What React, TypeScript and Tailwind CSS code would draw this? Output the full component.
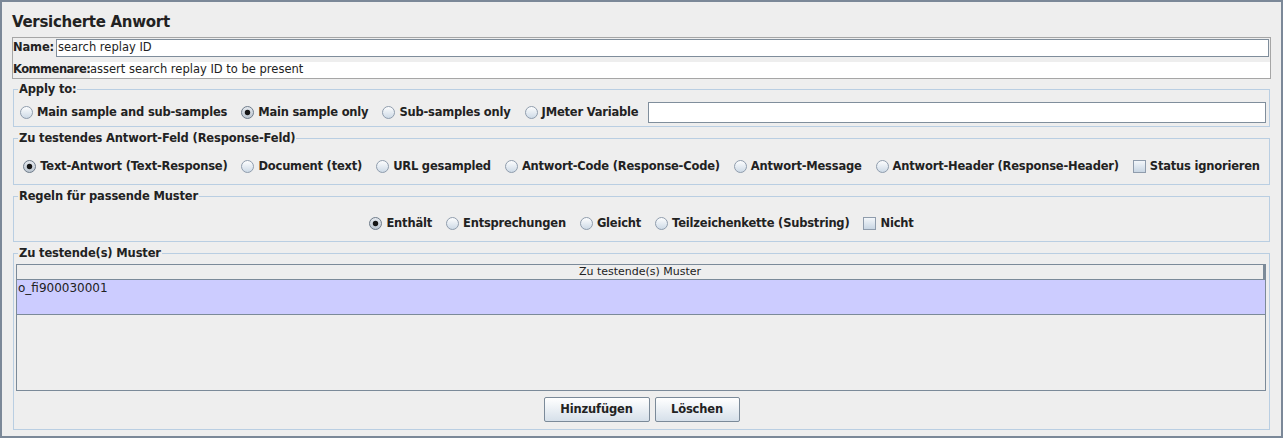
import React from "react";

function Radio({ checked }: { checked?: boolean }) {
  const id = checked ? "radOn" : "radOff";
  return (
    <svg width="13" height="13" viewBox="0 0 13 13" className="shrink-0 block">
      <defs>
        <linearGradient id={id} x1="0" y1="0" x2="0" y2="1">
          <stop offset="0" stopColor={checked ? "#e6eaef" : "#ffffff"} />
          <stop offset="1" stopColor={checked ? "#b9c4cf" : "#cbd8e5"} />
        </linearGradient>
      </defs>
      <circle cx="6.5" cy="6.5" r="6" fill={`url(#${id})`} stroke={checked ? "#6f7c8a" : "#8f9cac"} strokeWidth="1" />
      {checked && <circle cx="6.5" cy="6.5" r="2.7" fill="#161616" />}
    </svg>
  );
}

function Check() {
  return (
    <svg width="13" height="13" viewBox="0 0 13 13" className="shrink-0 block">
      <defs>
        <linearGradient id="chk" x1="0" y1="0" x2="0" y2="1">
          <stop offset="0" stopColor="#f5f8fb" />
          <stop offset="1" stopColor="#c6d4e2" />
        </linearGradient>
      </defs>
      <rect x="0.5" y="0.5" width="12" height="12" fill="url(#chk)" stroke="#8f9cac" strokeWidth="1" />
    </svg>
  );
}

function Opt({ label, checked, box }: { label: string; checked?: boolean; box?: boolean }) {
  return (
    <div className="flex items-center gap-[4px] whitespace-nowrap">
      {box ? <Check /> : <Radio checked={checked} />}
      <span className="font-bold tracking-[-0.2px]">{label}</span>
    </div>
  );
}

function Legend({ children }: { children: React.ReactNode }) {
  return (
    <legend className="ml-[4px] px-[1px] font-bold leading-[14px] tracking-[-0.15px] text-[#222]">{children}</legend>
  );
}

export default function App() {
  return (
    <div className="w-[1283px] h-[438px] overflow-hidden border-2 border-[#7b8898] bg-[#eeeeee] px-[10px] font-['DejaVu_Sans',sans-serif] text-[11.5px] text-[#222]">
      <div className="mt-[10px] h-[20px] text-[15px] leading-[20px] font-bold tracking-[-0.3px] text-[#222]">
        Versicherte Anwort
      </div>

      <div className="mt-[5px] border border-[#a6a6a6] pt-[1px]">
        <div className="flex h-[18px] items-center">
          <span className="w-[43px] shrink-0 font-bold tracking-[-0.15px]">Name:</span>
          <div className="mr-[1px] flex h-[18px] flex-1 items-center border border-[#7f8d9b] bg-white pl-[1px] text-[11.5px]">
            search replay ID
          </div>
        </div>
        <div className="mt-[5px] flex h-[16px] items-center">
          <span className="w-[77px] shrink-0 whitespace-nowrap font-bold tracking-[-0.5px]">Kommenare:</span>
          <div className="flex h-[16px] flex-1 items-center bg-white">assert search replay ID to be present</div>
        </div>
      </div>

      <fieldset className="mx-[1px] mt-[3px] min-w-0 border border-[#b9cee2] p-0">
        <Legend>Apply to:</Legend>
        <div className="flex h-[21px] items-center gap-[14px] pl-[6px] pr-[3px] mt-[6px] mb-[3px]">
          <Opt label="Main sample and sub-samples" />
          <Opt label="Main sample only" checked />
          <Opt label="Sub-samples only" />
          <Opt label="JMeter Variable" />
          <div className="-ml-[4px] h-[21px] flex-1 border border-[#808e9c] bg-white" />
        </div>
      </fieldset>

      <fieldset className="mx-[1px] mt-[4px] min-w-0 border border-[#b9cee2] p-0">
        <Legend>Zu testendes Antwort-Feld (Response-Feld)</Legend>
        <div className="mt-[11px] mb-[7px] flex h-[21px] items-center justify-center gap-[14px]">
          <Opt label="Text-Antwort (Text-Response)" checked />
          <Opt label="Document (text)" />
          <Opt label="URL gesampled" />
          <Opt label="Antwort-Code (Response-Code)" />
          <Opt label="Antwort-Message" />
          <Opt label="Antwort-Header (Response-Header)" />
          <Opt label="Status ignorieren" box />
        </div>
      </fieldset>

      <fieldset className="mx-[1px] mt-[4px] min-w-0 border border-[#b9cee2] p-0">
        <Legend>Regeln für passende Muster</Legend>
        <div className="mt-[10px] mb-[7px] flex h-[21px] items-center justify-center gap-[14px]">
          <Opt label="Enthält" checked />
          <Opt label="Entsprechungen" />
          <Opt label="Gleicht" />
          <Opt label="Teilzeichenkette (Substring)" />
          <Opt label="Nicht" box />
        </div>
      </fieldset>

      <fieldset className="mx-[1px] mt-[4px] min-w-0 border border-[#b9cee2] p-0">
        <Legend>Zu testende(s) Muster</Legend>
        <div className="mt-[4px] ml-[2px] mr-[3px] flex h-[127px] flex-col border border-[#7b8a99] bg-[#eeeeee]">
          <div className="h-[15px] border-b border-r-2 border-[#7b8a99] text-center text-[11px] leading-[14px] font-normal">
            Zu testende(s) Muster
          </div>
          <div className="h-[35px] border-b border-[#7b8a99] bg-[#ccccff] pl-[1px] text-[12px] leading-[16px]">
            o_fi900030001
          </div>
        </div>
        <div className="mt-[6px] mb-[7px] flex justify-center gap-[5px]">
          <button className="h-[25px] w-[106px] rounded-[2px] border border-[#7b8a99] bg-gradient-to-b from-[#ffffff] to-[#d6e0ea] font-bold tracking-[-0.15px] text-[#222]">
            Hinzufügen
          </button>
          <button className="h-[25px] w-[85px] rounded-[2px] border border-[#7b8a99] bg-gradient-to-b from-[#ffffff] to-[#d6e0ea] font-bold tracking-[-0.15px] text-[#222]">
            Löschen
          </button>
        </div>
      </fieldset>
    </div>
  );
}
